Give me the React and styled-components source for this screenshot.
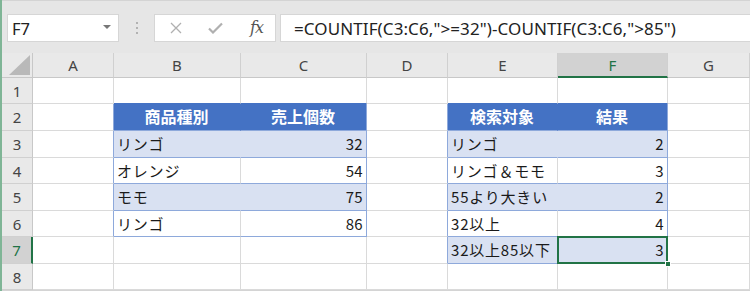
import React from "react";
import styled, { createGlobalStyle, css } from "styled-components";

const GlobalStyle = createGlobalStyle`
  html, body { margin: 0; padding: 0; background: #ffffff; }
  body { font-family: "Noto Sans CJK JP", "Noto Sans", sans-serif; overflow: hidden; }
  * { box-sizing: border-box; }
`;

const GREEN = "#217346";
const BLUE = "#4472c4";
const BAND = "#d9e1f2";
const TBORDER = "#8ea9db";
const GRID = "#dadada";

const Window = styled.div`
  width: 750px;
  height: 291px;
  border-left: 2px solid #7fb596;
  display: flex;
  flex-direction: column;
  background: #e6e6e6;
`;

const FormulaBar = styled.div`
  height: 53px;
  flex: none;
  display: flex;
  align-items: flex-start;
  padding: 13px 0 0 5px;
  border-top: 1px solid #d4d4d4;
`;

const Box = styled.div`
  height: 28px;
  background: #ffffff;
  border: 1px solid #d6d6d6;
  display: flex;
  align-items: center;
`;

const NameBox = styled(Box)`
  width: 112px;
  padding: 0 6px 0 4px;
  justify-content: space-between;
  font-family: "Noto Sans", sans-serif;
  font-size: 16.5px;
  color: #222;
`;

const Caret = styled.span`
  width: 0;
  height: 0;
  border-left: 4px solid transparent;
  border-right: 4px solid transparent;
  border-top: 4px solid #777;
  margin-right: 1px;
  margin-bottom: 3px;
`;

const Dots = styled.div`
  width: 35px;
  height: 28px;
  display: flex;
  flex-direction: column;
  align-items: center;
  justify-content: center;
  gap: 3px;
  span {
    width: 2px;
    height: 2px;
    background: #a0a0a0;
    border-radius: 1px;
  }
`;

const FxBox = styled(Box)`
  width: 122px;
  padding: 0 0 0 15px;
  gap: 26px;
  svg { display: block; }
`;

const Fx = styled.span`
  font-family: "DejaVu Serif", "Liberation Serif", serif;
  font-style: italic;
  font-size: 16px;
  color: #555;
  margin-left: 1px;
  letter-spacing: -1px;
  margin-bottom: 2px;
`;

const FormulaBox = styled(Box)`
  flex: 1;
  margin-left: 4px;
  border-right: none;
  padding-left: 13px;
  font-family: "Noto Sans", sans-serif;
  font-size: 17px;
  letter-spacing: 0.1px;
  color: #222;
  white-space: nowrap;
`;

const Sheet = styled.div`
  display: grid;
  grid-template-columns: 31px 81px 127px 126px 81px 110px 110px 82px;
  grid-template-rows: 25px 26px 27px 27px 26px 27px 26px 27px 26px;
  background: #ffffff;
  border-bottom: 1px solid #d4d4d4;
`;

const Cell = styled.div`
  position: relative;
  display: flex;
  align-items: center;
  padding: 0 4px 1px 3px;
  font-size: 15px;
  letter-spacing: 0.8px;
  color: #1a1a1a;
  white-space: nowrap;
  border-right: 1px solid ${(p) => p.$rc || GRID};
  border-bottom: 1px solid ${(p) => p.$bc || GRID};
  background: ${(p) => p.$bg || "#ffffff"};
  justify-content: ${(p) =>
    p.$align === "right" ? "flex-end" : p.$align === "center" ? "center" : "flex-start"};
  ${(p) =>
    p.$align === "right" &&
    css`
      letter-spacing: 0.3px;
      padding-right: 3px;
    `}
  ${(p) =>
    p.$head &&
    css`
      font-size: 16px;
      letter-spacing: 0;
      font-weight: 700;
      color: #ffffff;
      padding-bottom: 2px;
    `}
`;

const ColHead = styled.div`
  display: flex;
  align-items: center;
  justify-content: center;
  font-family: "Noto Sans", sans-serif;
  font-size: 15px;
  color: ${(p) => (p.$active ? GREEN : "#444")};
  background: ${(p) => (p.$active ? "#d2d2d2" : "#e9e9e9")};
  border-right: 1px solid #d0d0d0;
  border-bottom: ${(p) => (p.$active ? `2px solid ${GREEN}` : "1px solid #c8c8c8")};
  padding-top: ${(p) => (p.$active ? "1px" : "0")};
`;

const Corner = styled.div`
  background: #e9e9e9;
  border-right: 1px solid #c8c8c8;
  border-bottom: 1px solid #c8c8c8;
  display: flex;
  align-items: flex-end;
  justify-content: flex-end;
  padding: 0 2px 2px 0;
`;

const RowHead = styled.div`
  display: flex;
  align-items: center;
  justify-content: center;
  font-family: "Noto Sans", sans-serif;
  font-size: 15px;
  color: ${(p) => (p.$active ? GREEN : "#444")};
  background: ${(p) => (p.$active ? "#d2d2d2" : "#e9e9e9")};
  border-right: ${(p) => (p.$active ? `2px solid ${GREEN}` : "1px solid #c8c8c8")};
  border-bottom: 1px solid #d0d0d0;
`;

const Selection = styled.div`
  position: absolute;
  top: -1px;
  left: -1px;
  right: -1px;
  bottom: -1px;
  border: 2px solid ${GREEN};
  pointer-events: none;
  z-index: 2;
`;

const Handle = styled.div`
  position: absolute;
  right: -4px;
  bottom: -4px;
  width: 6px;
  height: 6px;
  background: ${GREEN};
  border: 1px solid #ffffff;
  z-index: 3;
`;

const cols = ["A", "B", "C", "D", "E", "F", "G"];

// table 1: B2:C6, table 2: E2:F7
const t1 = {
  2: ["商品種別", "売上個数"],
  3: ["リンゴ", "32"],
  4: ["オレンジ", "54"],
  5: ["モモ", "75"],
  6: ["リンゴ", "86"],
};
const t2 = {
  2: ["検索対象", "結果"],
  3: ["リンゴ", "2"],
  4: ["リンゴ＆モモ", "3"],
  5: ["55より大きい", "2"],
  6: ["32以上", "4"],
  7: ["32以上85以下", "3"],
};

function tableCells(table, r) {
  const row = table[r];
  const isHead = r === 2;
  const band = r % 2 === 1;
  if (!row) {
    if (r === 1) {
      return { before: {}, a: { $bc: BLUE }, b: { $bc: BLUE } };
    }
    return null;
  }
  const bg = isHead ? BLUE : band ? BAND : "#ffffff";
  return {
    before: { $rc: TBORDER },
    a: {
      $bg: bg,
      $rc: isHead ? BLUE : band ? BAND : GRID,
      $bc: TBORDER,
      $head: isHead,
      $align: isHead ? "center" : "left",
      text: row[0],
    },
    b: {
      $bg: bg,
      $rc: TBORDER,
      $bc: TBORDER,
      $head: isHead,
      $align: isHead ? "center" : "right",
      text: row[1],
    },
  };
}

function Row({ r }) {
  const t1p = tableCells(t1, r) || { before: {}, a: {}, b: {} };
  const t2p = tableCells(t2, r) || { before: {}, a: {}, b: {} };
  const active = r === 7;
  const { text: aText, ...aProps } = t1p.a;
  const { text: bText, ...bProps } = t1p.b;
  const { text: eText, ...eProps } = t2p.a;
  const { text: fText, ...fProps } = t2p.b;
  return (
    <>
      <RowHead $active={active}>{r}</RowHead>
      <Cell {...t1p.before} />
      <Cell {...aProps}>{aText}</Cell>
      <Cell {...bProps}>{bText}</Cell>
      <Cell {...t2p.before} />
      <Cell {...eProps}>{eText}</Cell>
      <Cell {...fProps}>
        {fText}
        {active && (
          <>
            <Selection />
            <Handle />
          </>
        )}
      </Cell>
      <Cell />
    </>
  );
}

export default function App() {
  return (
    <>
      <GlobalStyle />
      <Window>
        <FormulaBar>
          <NameBox>
            <span>F7</span>
            <Caret />
          </NameBox>
          <Dots>
            <span />
            <span />
            <span />
          </Dots>
          <FxBox>
            <svg width="12" height="12" viewBox="0 0 12 12">
              <path d="M1 1 L11 11 M11 1 L1 11" stroke="#b0b0b0" strokeWidth="1.3" fill="none" />
            </svg>
            <svg width="15" height="12" viewBox="0 0 15 12">
              <path d="M1 6.5 L5 10.5 L14 1.5" stroke="#b0b0b0" strokeWidth="2.2" fill="none" />
            </svg>
            <Fx>fx</Fx>
          </FxBox>
          <FormulaBox>=COUNTIF(C3:C6,"&gt;=32")-COUNTIF(C3:C6,"&gt;85")</FormulaBox>
        </FormulaBar>
        <Sheet>
          <Corner>
            <svg width="21" height="20" viewBox="0 0 21 20">
              <polygon points="21,0 21,20 0,20" fill="#b9b9b9" />
            </svg>
          </Corner>
          {cols.map((c) => (
            <ColHead key={c} $active={c === "F"}>
              {c}
            </ColHead>
          ))}
          {[1, 2, 3, 4, 5, 6, 7, 8].map((r) => (
            <Row key={r} r={r} />
          ))}
        </Sheet>
      </Window>
    </>
  );
}
